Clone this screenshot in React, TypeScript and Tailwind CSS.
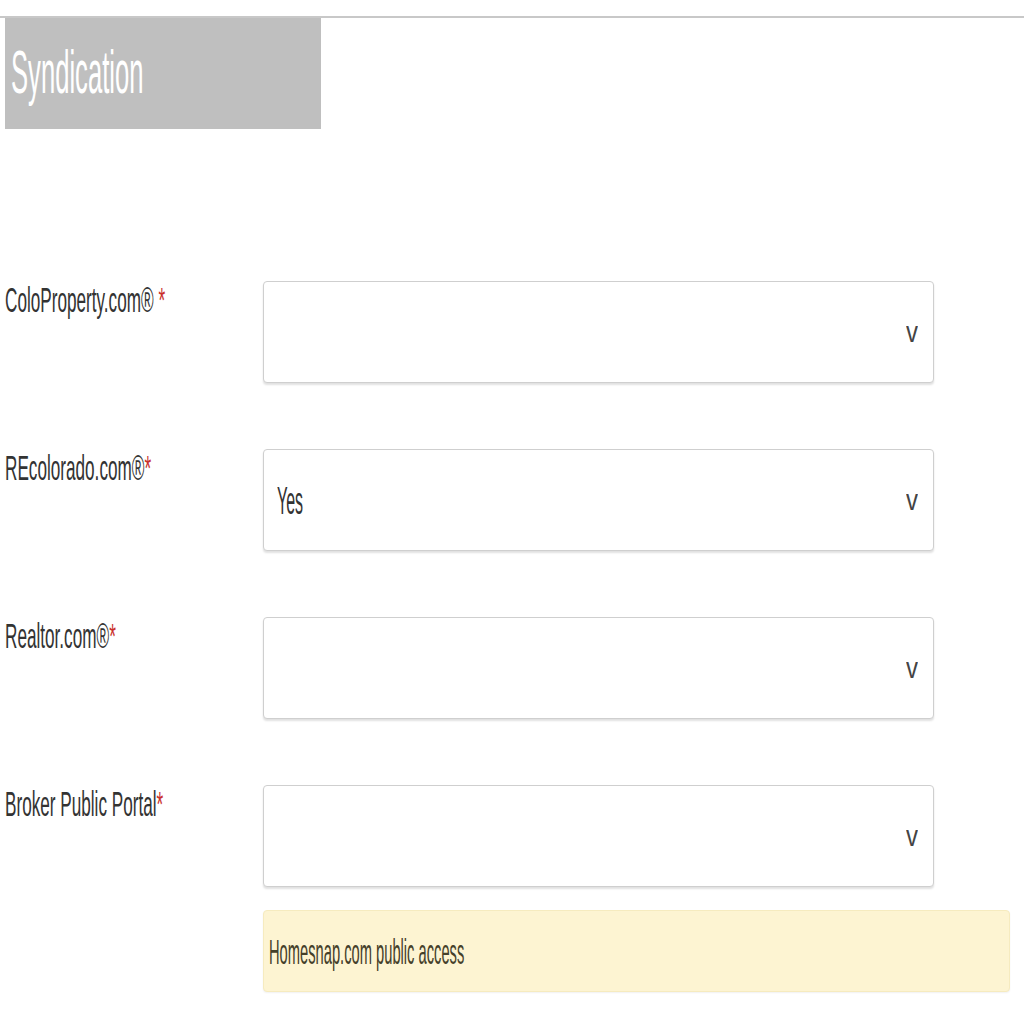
import React from "react";

type Field = {
  label: string;
  gap?: boolean;
  value?: string;
};

const fields: Field[] = [
  { label: "ColoProperty.com®", gap: true },
  { label: "REcolorado.com®", value: "Yes" },
  { label: "Realtor.com®" },
  { label: "Broker Public Portal" },
];

const Squeeze: React.FC<{ className?: string; children: React.ReactNode }> = ({
  className,
  children,
}) => (
  <span className={`inline-block origin-left whitespace-nowrap ${className ?? ""}`}>
    {children}
  </span>
);

const App = () => {
  return (
    <div className="min-h-screen bg-white pt-[16px] font-['Liberation_Sans',Arial,sans-serif] text-[#333]">
      {/* Title bar */}
      <div className="border-t-2 border-[#c8c8c8]">
        <div className="ml-[5px] flex h-[111px] w-[316px] items-start bg-[#bfbfbf] pl-[6px] pt-[24px]">
          <Squeeze className="scale-x-[0.42] text-[61px] leading-none text-white">
            Syndication
          </Squeeze>
        </div>
      </div>

      {/* Fields */}
      <div className="mt-[152px] flex flex-col gap-[66px]">
        {fields.map((field, index) => (
          <div key={index} className="flex">
            <div className="w-[263px] pl-[5px] pt-[1px]">
              <Squeeze className="scale-x-[0.49] text-[35px] leading-none">
                {field.label}
                {field.gap ? " " : ""}
                <span className="text-[#c9302c]">*</span>
              </Squeeze>
            </div>
            <div className="flex h-[102px] w-[671px] items-center justify-between rounded-[4px] border border-[#cfcfcf] bg-white pl-[13px] pr-[15px] shadow-[0_2px_2px_rgba(0,0,0,0.12)]">
              <Squeeze className="scale-x-[0.41] text-[39px] leading-none text-[#333]">
                {field.value ?? ""}
              </Squeeze>
              <span className="inline-block origin-right scale-x-[0.8] text-[30px] leading-none text-[#444]">
                v
              </span>
            </div>
          </div>
        ))}
      </div>

      {/* Note */}
      <div className="ml-[263px] mt-[23px] flex h-[82px] w-[747px] items-center rounded-[4px] border border-[#f6ebbf] bg-[#fdf4d2] pl-[5px] shadow-[0_1px_2px_rgba(0,0,0,0.06)]">
        <Squeeze className="scale-x-[0.42] text-[35px] leading-none text-[#45402a]">
          Homesnap.com public access
        </Squeeze>
      </div>
    </div>
  );
};

export default App;
